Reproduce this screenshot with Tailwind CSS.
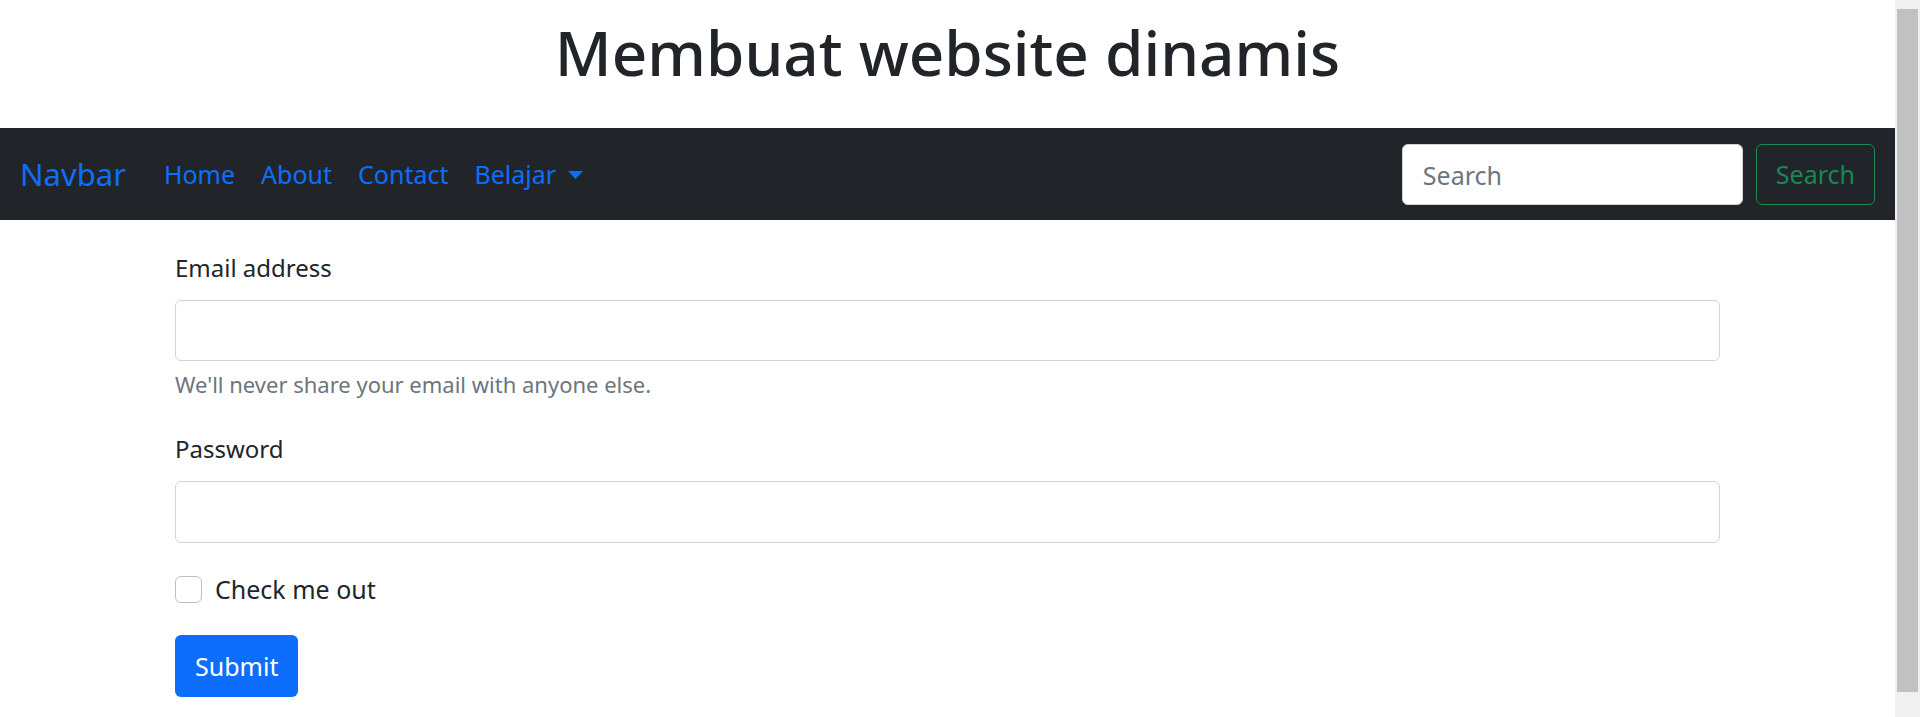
<!DOCTYPE html>
<html lang="id">
<head>
<meta charset="utf-8">
<meta name="viewport" content="width=device-width, initial-scale=1">
<title>Membuat website dinamis</title>
<script src="https://cdn.jsdelivr.net/npm/@tailwindcss/browser@4"></script>
</head>
<body class="flex min-h-screen bg-white font-['Noto_Sans','Open_Sans',sans-serif] text-[25px]/[39px] text-[#212529]">
  <div class="min-w-0 flex-1">
    <h1 class="pt-3 pb-[36px] text-center text-[62px]/[80px] font-medium">Membuat website dinamis</h1>

    <nav class="flex items-center bg-[#212529] px-5 pt-4 pb-[15px] text-[#0d6efd]">
      <a href="#" class="mr-[38px] text-[31px]/[39px]">Navbar</a>
      <ul class="flex items-center gap-[26px]">
        <li><a href="#">Home</a></li>
        <li><a href="#">About</a></li>
        <li><a href="#">Contact</a></li>
        <li>
          <button type="button" class="flex items-center gap-3">Belajar
            <svg class="h-2 w-[15px]" viewBox="0 0 15 8" fill="currentColor" aria-hidden="true"><path d="M0 0h15L7.500 8z"/></svg>
          </button>
        </li>
      </ul>
      <form class="ml-auto flex gap-[13px]" role="search">
        <input type="search" placeholder="Search" aria-label="Search" class="h-[61px] w-[341px] rounded-md border border-[#ced4da] bg-white px-5 text-[#212529] placeholder:text-[#6c757d]">
        <button type="submit" class="h-[61px] rounded-md border border-[#198754] px-[19px] text-[#198754]">Search</button>
      </form>
    </nav>

    <form class="mx-auto mt-7 w-full max-w-[1545px]">
      <div class="mb-7">
        <label for="email" class="mb-[13px] block text-2xl/[39px]">Email address</label>
        <input type="email" id="email" aria-describedby="email-help" class="block h-[61px] w-full rounded-md border border-[#ced4da] px-5">
        <p id="email-help" class="mt-[6px] text-[22px]/[34px] text-[#6c757d]">We'll never share your email with anyone else.</p>
      </div>
      <div class="mb-[27px]">
        <label for="password" class="mb-[13px] block text-2xl/[39px]">Password</label>
        <input type="password" id="password" class="block h-[62px] w-full rounded-md border border-[#ced4da] px-5">
      </div>
      <div class="mb-[26px] flex items-center gap-[13px]">
        <input type="checkbox" id="check" class="size-[27px] appearance-none rounded-md border border-[#bfbfbf] bg-white checked:bg-[#0d6efd]">
        <label for="check">Check me out</label>
      </div>
      <button type="submit" class="block h-[62px] rounded-md bg-[#0d6efd] px-5 text-white">Submit</button>
    </form>
  </div>

  <!-- Scrollbar track and thumb -->
  <div class="flex w-[25px] flex-none bg-[#f0f0f0] px-[2px] pt-[9px] pb-[25px]" aria-hidden="true">
    <div class="flex-1 bg-[#c1c1c1]"></div>
  </div>
</body>
</html>
